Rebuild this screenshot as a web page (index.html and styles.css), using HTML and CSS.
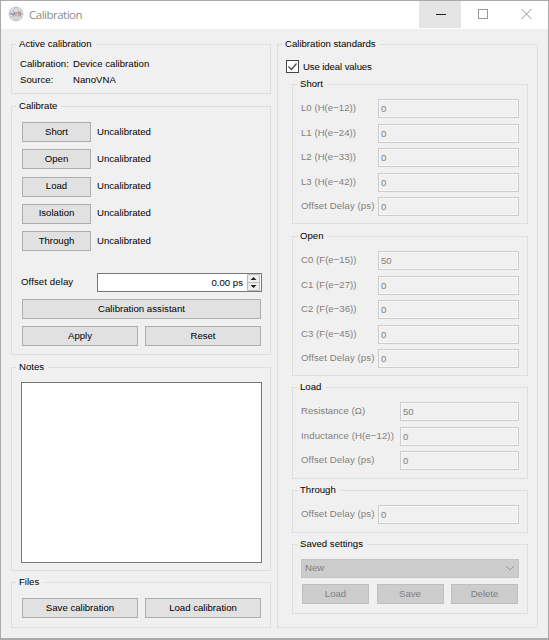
FILE: index.html
```html
<!DOCTYPE html>
<html lang="en">
<head>
<meta charset="utf-8">
<title>Calibration</title>
<link rel="stylesheet" href="styles.css">
</head>
<body>
<div class="window">
  <header class="titlebar">
    <svg class="app-icon" viewBox="0 0 16 16" width="16" height="16"><circle cx="8" cy="8" r="7" fill="#e0e0e2" stroke="#ccccce"/><path d="M1 8h14M8 1c-4 3-4 11 0 14M8 1c4 3 4 11 0 14M2 4c4 4 8 4 12 0M2 12c4-4 8-4 12 0" fill="none" stroke="#aaaab0" stroke-width=".7"/><path d="M8 11V6l4 3" fill="none" stroke="#d8957c"/><path d="M2 7l4 2 1-3M10 6l3 1-1 3" fill="none" stroke="#888892"/></svg>
    <h1>Calibration</h1>
    <div class="controls">
      <span class="min"><svg width="42" height="28"><path d="M17 14.500h10" stroke="#222"/></svg></span>
      <span><svg width="42" height="28"><rect x="17.500" y="9.500" width="9" height="9" fill="none" stroke="#999"/></svg></span>
      <span><svg width="45" height="28"><path d="M18.500 9l10 10M28.500 9l-10 10" stroke="#999"/></svg></span>
    </div>
  </header>
  <main>
    <div class="left">
      <section class="group active"><h2>Active calibration</h2>
        <dl><dt>Calibration:</dt><dd>Device calibration</dd><dt>Source:</dt><dd>NanoVNA</dd></dl>
      </section>
      <section class="group calibrate"><h2>Calibrate</h2>
        <div class="step"><button>Short</button><span>Uncalibrated</span></div>
        <div class="step"><button>Open</button><span>Uncalibrated</span></div>
        <div class="step"><button>Load</button><span>Uncalibrated</span></div>
        <div class="step"><button>Isolation</button><span>Uncalibrated</span></div>
        <div class="step"><button>Through</button><span>Uncalibrated</span></div>
        <div class="delay"><label>Offset delay</label>
          <div class="spin"><span>0.00 ps</span><svg width="14" height="17"><path d="M.5.5h12v8H.5zM.5 8.500h12v8H.5z" fill="#eee" stroke="#bbb"/><path d="M3.500 6l3-3 3 3zM3.500 11l3 3 3-3z" fill="#222"/></svg></div>
        </div>
        <button class="wide">Calibration assistant</button>
        <div class="pair"><button>Apply</button><button>Reset</button></div>
      </section>
      <section class="group notes"><h2>Notes</h2><div class="memo"></div></section>
      <section class="group files"><h2>Files</h2>
        <div class="pair"><button>Save calibration</button><button>Load calibration</button></div>
      </section>
    </div>
    <section class="group standards"><h2>Calibration standards</h2>
      <label class="check"><svg width="13" height="13"><rect x=".5" y=".5" width="12" height="12" fill="#fff" stroke="#444"/><path d="M2.500 6.500l3 3 5-6" fill="none" stroke="#444" stroke-width="1.200"/></svg>Use ideal values</label>
      <section class="group short"><h2>Short</h2>
        <div class="row"><label>L0 (H(e−12))</label><div class="field">0</div></div>
        <div class="row"><label>L1 (H(e−24))</label><div class="field">0</div></div>
        <div class="row"><label>L2 (H(e−33))</label><div class="field">0</div></div>
        <div class="row"><label>L3 (H(e−42))</label><div class="field">0</div></div>
        <div class="row"><label class="loose">Offset Delay (ps)</label><div class="field">0</div></div>
      </section>
      <section class="group open"><h2>Open</h2>
        <div class="row"><label>C0 (F(e−15))</label><div class="field">50</div></div>
        <div class="row"><label>C1 (F(e−27))</label><div class="field">0</div></div>
        <div class="row"><label>C2 (F(e−36))</label><div class="field">0</div></div>
        <div class="row"><label>C3 (F(e−45))</label><div class="field">0</div></div>
        <div class="row"><label class="loose">Offset Delay (ps)</label><div class="field">0</div></div>
      </section>
      <section class="group load"><h2>Load</h2>
        <div class="row"><label>Resistance (Ω)</label><div class="field">50</div></div>
        <div class="row"><label class="loose">Inductance (H(e−12))</label><div class="field">0</div></div>
        <div class="row"><label class="loose">Offset Delay (ps)</label><div class="field">0</div></div>
      </section>
      <section class="group through"><h2>Through</h2>
        <div class="row"><label class="loose">Offset Delay (ps)</label><div class="field">0</div></div>
      </section>
      <section class="group saved"><h2>Saved settings</h2>
        <div class="select">New<svg width="10" height="7"><path d="M1 1l4 4 4-4" fill="none" stroke="#999"/></svg></div>
        <div class="trio"><button disabled>Load</button><button disabled>Save</button><button disabled>Delete</button></div>
      </section>
    </section>
  </main>
</div>
</body>
</html>
```
FILE: styles.css
```css
* { box-sizing: border-box; }
body { margin: 0; font: 9.6px/12px "Liberation Sans", sans-serif; color: #000; }
h1, h2, dl, dd { margin: 0; font-weight: normal; }
.window { width: 549px; height: 640px; background: #f0f0f0; border: 1px solid #aaa; border-bottom-width: 2px; }
.titlebar { height: 28px; background: #fff; display: flex; align-items: center; padding-left: 7px; }
h1 { font: 11.5px/16px "Open Sans", sans-serif; color: #8c8c8c; margin-left: 5px; letter-spacing: -.5px; }
.app-icon { position: relative; top: -1px; }
.controls { display: flex; margin-left: auto; height: 28px; }
.controls span { height: 28px; }
.controls .min { height: 27px; background: #e5e5e5; }
.controls svg { display: block; position: relative; top: -1px; }
main { display: grid; grid-template-columns: 260px 261px; column-gap: 6px; padding: 15px 0 0 10px; }
.group { position: relative; border: 1px solid #dedede; display: flex; flex-direction: column; }
.group h2 { position: absolute; top: -7px; left: 4px; padding: 0 4px 0 3px; background: #f0f0f0; font-size: inherit; line-height: 12px; white-space: nowrap; }
.left { display: flex; flex-direction: column; }
.active { height: 50px; padding: 13px 8px; }
dl { display: grid; grid-template-columns: 53px 1fr; row-gap: 4px; letter-spacing: .03px; }
.calibrate { height: 249px; margin-top: 12px; padding: 15px 9px 7px 10px; }
button { display: flex; align-items: center; justify-content: center; font: inherit; color: #000; background: #e1e1e1; border: 1px solid #adadad; border-radius: 0; padding: 0 0 1px; height: 20px; }
.wide { letter-spacing: .03px; }
.step { display: flex; align-items: center; height: 20px; margin-bottom: 7.300px; }
.step button { width: 69px; margin-right: 6px; }
.step span { padding-bottom: 1px; }
.delay { display: flex; align-items: center; margin-top: 15px; height: 19px; margin-right: -1px; }
.delay label { width: 76px; margin-left: -1px; padding-bottom: 2px; letter-spacing: .1px; }
.spin { flex: 1; height: 19px; border: 1px solid #777; background: #fff; display: flex; align-items: center; justify-content: flex-end; gap: 4px; }
.wide { margin-top: 7px; }
.pair { display: grid; grid-template-columns: 116px 116px; justify-content: space-between; }
.calibrate .pair { margin-top: 7px; }
.notes { height: 204px; margin-top: 12px; padding: 14px 8px 7px 9px; }
.memo { height: 181px; border: 1px solid #777; background: #fff; }
.files { height: 46px; margin-top: 11px; padding: 15px 9px 8px 10px; }
.standards { height: 584px; padding: 15px 9px 0 14px; }
.standards > h2 { left: 5px; padding-left: 2px; }
.check { display: flex; align-items: center; gap: 4px; height: 13px; margin-left: -6px; letter-spacing: -.1px; }
.standards .group { padding: 14px 8px 0; }
.standards .group h2 { left: 5px; padding-left: 2px; }
.standards .short { margin-top: 11px; height: 140px; }
.open { margin-top: 12px; height: 140px; }
.load { margin-top: 11px; height: 92px; }
.through { margin-top: 11px; height: 43px; }
.saved { margin-top: 11px; height: 70px; }
.row { display: flex; height: 19px; margin-bottom: 5.500px; color: #808080; }
.row label { width: 77px; padding-top: 3px; white-space: nowrap; letter-spacing: .03px; }
.row .loose { letter-spacing: .1px; }
.load .row label { width: 99px; }
.field { flex: 1; border: 1px solid #ccc; box-shadow: inset 0 0 0 1px #f8f8f8; padding: 3px 2px 0; }
.select { display: flex; justify-content: space-between; align-items: center; height: 19px; background: #ccc; border: 1px solid #c4c4c4; padding: 0 3px 1px; color: #808080; }
.trio { display: grid; grid-template-columns: repeat(3, 67px); justify-content: space-between; margin: 6px 1px 0; }
button:disabled { color: #808080; background: #ccc; border-color: #bfbfbf; }
```
